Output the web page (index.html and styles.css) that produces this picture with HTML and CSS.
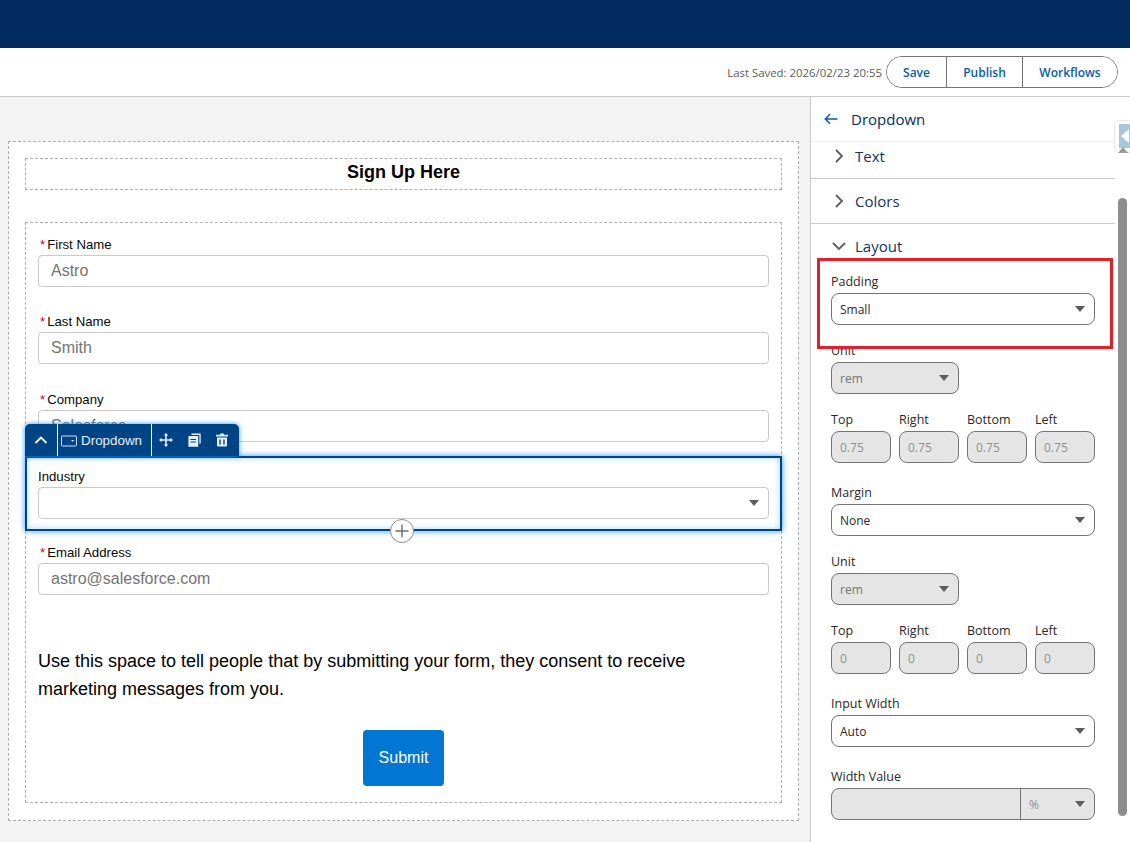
FILE: index.html
```html
<!DOCTYPE html>
<html lang="en">
<head>
    <meta charset="UTF-8">
    <meta name="viewport" content="width=device-width, initial-scale=1.0">
    <title>Form Builder</title>
    <link rel="stylesheet" href="styles.css">
</head>
<body>
    <div class="top-bar"></div>

    <div class="action-bar">
        <span class="last-saved">Last Saved: 2026/02/23 20:55</span>
        <div class="action-group">
            <button class="action-btn btn-save">Save</button>
            <button class="action-btn btn-publish">Publish</button>
            <button class="action-btn btn-workflows">Workflows</button>
        </div>
    </div>

    <div class="workspace">
        <div class="canvas">
            <div class="form-card">
                <div class="form-title">Sign Up Here</div>
                <div class="form-body">
                    <div class="field">
                        <label class="field-label"><span class="req">*</span>First Name</label>
                        <div class="field-input">Astro</div>
                    </div>
                    <div class="field">
                        <label class="field-label"><span class="req">*</span>Last Name</label>
                        <div class="field-input">Smith</div>
                    </div>
                    <div class="field">
                        <label class="field-label"><span class="req">*</span>Company</label>
                        <div class="field-input">Salesforce</div>
                    </div>
                    <div class="field field-selected">
                        <div class="block-toolbar">
                            <span class="tool tool-up">
                                <svg width="14" height="14" viewBox="0 0 14 14"><path d="M1.500 10 7 4.500 12.500 10" fill="none" stroke="#fff" stroke-width="1.800"/></svg>
                            </span>
                            <span class="tool tool-name">
                                <svg width="16" height="12" viewBox="0 0 16 12"><rect x="0.500" y="1" width="15" height="10" rx="1" fill="none" stroke="#cfe3f7" stroke-width="1"/><path d="M10 5h3.400l-1.700 1.800z" fill="#cfe3f7"/></svg>
                                Dropdown
                            </span>
                            <span class="tool tool-icon">
                                <svg width="14" height="14" viewBox="0 0 14 14"><path d="M7 0 9.300 2.600H7.800V6.200h3.600V4.700L14 7l-2.600 2.300V7.800H7.800v3.600h1.500L7 14l-2.300-2.600h1.500V7.800H2.600v1.500L0 7l2.600-2.300v1.500h3.600V2.600H4.700z" fill="#e6f0fa"/></svg>
                            </span>
                            <span class="tool tool-icon">
                                <svg width="13" height="14" viewBox="0 0 13 14"><path d="M3.500 0.500H12a.7.7 0 0 1 .7.7V10a.7.7 0 0 1-.7.7h-.6V2H3.500z" fill="#e6f0fa"/><path d="M1 3h8.600a.6.6 0 0 1 .6.6v9.600a.6.6 0 0 1-.6.6H1a.6.6 0 0 1-.6-.6V3.600A.6.6 0 0 1 1 3z" fill="#e6f0fa"/><path d="M2.400 6.500h5.600M2.400 9h5.600" stroke="#014486" stroke-width="1"/></svg>
                            </span>
                            <span class="tool tool-icon">
                                <svg width="12" height="14" viewBox="0 0 12 14"><path d="M4.200 0.500h3.600v1.300H12v1.600H0V1.800h4.200z" fill="#e6f0fa"/><path d="M1 4.600h10v8.200a.8.8 0 0 1-.8.8H1.800a.8.8 0 0 1-.8-.8z" fill="#e6f0fa"/><path d="M4 6.500v5M8 6.500v5" stroke="#014486" stroke-width="1.400"/></svg>
                            </span>
                        </div>
                        <label class="field-label">Industry</label>
                        <div class="field-input field-select"><span class="caret"></span></div>
                        <span class="add-block">
                            <svg width="14" height="14" viewBox="0 0 14 14"><path d="M7 0.500v13M0.500 7h13" stroke="#706e6b" stroke-width="1.400"/></svg>
                        </span>
                    </div>
                    <div class="field">
                        <label class="field-label"><span class="req">*</span>Email Address</label>
                        <div class="field-input">astro@salesforce.com</div>
                    </div>
                    <p class="consent">Use this space to tell people that by submitting your form, they consent to receive marketing messages from you.</p>
                    <div class="submit-row">
                        <button class="submit-btn">Submit</button>
                    </div>
                </div>
            </div>
        </div>

        <div class="panel">
            <div class="panel-header">
                <svg width="14" height="12" viewBox="0 0 14 12"><path d="M13.500 6H1.500M6 1.300 1.300 6 6 10.700" fill="none" stroke="#0b5cab" stroke-width="1.500"/></svg>
                <span>Dropdown</span>
            </div>

            <div class="section section-text">
                <svg class="chev" width="10" height="14" viewBox="0 0 10 14"><path d="M2 1 8 7 2 13" fill="none" stroke="#5c5c5c" stroke-width="1.800"/></svg>
                <span>Text</span>
            </div>
            <div class="section section-colors">
                <svg class="chev" width="10" height="14" viewBox="0 0 10 14"><path d="M2 1 8 7 2 13" fill="none" stroke="#5c5c5c" stroke-width="1.800"/></svg>
                <span>Colors</span>
            </div>
            <div class="section section-layout">
                <svg class="chev-down" width="14" height="10" viewBox="0 0 14 10"><path d="M1 2 7 8 13 2" fill="none" stroke="#5c5c5c" stroke-width="1.800"/></svg>
                <span>Layout</span>
            </div>

            <div class="panel-fields">
                <div class="prop prop-padding">
                    <div class="prop-label">Padding</div>
                    <div class="select">Small<span class="caret"></span></div>
                </div>
                <div class="prop prop-unit">
                    <div class="prop-label">Unit</div>
                    <div class="select select-half disabled">rem<span class="caret"></span></div>
                </div>
                <div class="sides">
                    <div class="side"><div class="prop-label">Top</div><div class="side-input">0.75</div></div>
                    <div class="side"><div class="prop-label">Right</div><div class="side-input">0.75</div></div>
                    <div class="side"><div class="prop-label">Bottom</div><div class="side-input">0.75</div></div>
                    <div class="side"><div class="prop-label">Left</div><div class="side-input">0.75</div></div>
                </div>
                <div class="prop prop-gap">
                    <div class="prop-label">Margin</div>
                    <div class="select">None<span class="caret"></span></div>
                </div>
                <div class="prop prop-unit-2">
                    <div class="prop-label">Unit</div>
                    <div class="select select-half disabled">rem<span class="caret"></span></div>
                </div>
                <div class="sides">
                    <div class="side"><div class="prop-label">Top</div><div class="side-input">0</div></div>
                    <div class="side"><div class="prop-label">Right</div><div class="side-input">0</div></div>
                    <div class="side"><div class="prop-label">Bottom</div><div class="side-input">0</div></div>
                    <div class="side"><div class="prop-label">Left</div><div class="side-input">0</div></div>
                </div>
                <div class="prop prop-gap">
                    <div class="prop-label">Input Width</div>
                    <div class="select">Auto<span class="caret"></span></div>
                </div>
                <div class="prop prop-gap">
                    <div class="prop-label">Width Value</div>
                    <div class="width-value">
                        <div class="width-input"></div>
                        <div class="width-unit">%<span class="caret"></span></div>
                    </div>
                </div>
            </div>

            <div class="highlight-box"></div>
            <div class="panel-scrollbar"></div>
            <div class="collapse-handle"><span class="collapse-tab"></span></div>
            <div class="scroll-arrow"></div>
        </div>
    </div>
</body>
</html>
```

FILE: styles.css
```css
* {
    box-sizing: border-box;
}
html, body {
    margin: 0;
    height: 100%;
    overflow: hidden;
}
body {
    font-family: 'Liberation Sans', Arial, sans-serif;
    background: #fff;
    color: #080707;
}
.top-bar {
    height: 48px;
    background: #032d60;
}
.action-bar {
    height: 49px;
    display: flex;
    align-items: center;
    justify-content: flex-end;
    padding: 0 12px 0 0;
    background: #fff;
    border-bottom: 1px solid #c9c9c9;
}
.last-saved {
    font-family: 'Open Sans', sans-serif;
    font-size: 11.400px;
    color: #5c5c5c;
    margin-right: 4px;
}
.action-group {
    display: flex;
    height: 32px;
    border: 1px solid #747474;
    border-radius: 16px;
    overflow: hidden;
}
.action-btn {
    font-family: 'Open Sans', sans-serif;
    font-size: 12px;
    font-weight: 600;
    color: #0b5cab;
    background: #fff;
    border: none;
    padding: 0;
    text-align: center;
}
.btn-save {
    width: 59px;
}
.btn-publish {
    width: 76px;
    border-left: 1px solid #747474;
}
.btn-workflows {
    width: 95px;
    border-left: 1px solid #747474;
}

.workspace {
    display: flex;
    height: 745px;
}
.canvas {
    width: 811px;
    background: #f3f3f3;
    padding: 44px 11px 0 8px;
    border-right: 1px solid #c9c9c9;
}

/* form on the canvas */
.form-card {
    height: 680px;
    background: #fff;
    border: 1px dashed #aeaeae;
    padding: 16px 16px;
}
.form-title {
    height: 32px;
    border: 1px dashed #aeaeae;
    text-align: center;
    font-size: 18px;
    font-weight: bold;
    line-height: 26px;
    color: #000;
}
.form-body {
    height: 581px;
    margin-top: 32px;
    border: 1px dashed #aeaeae;
    padding: 10px 12px 0;
    display: flex;
    flex-direction: column;
}
.field {
    height: 54px;
    margin-bottom: 23.400px;
    flex: none;
}
.field-label {
    display: block;
    height: 22px;
    font-size: 13.200px;
    line-height: 24px;
    color: #080707;
    padding-left: 2px;
}
.req {
    color: #ba0517;
    margin-right: 2px;
}
.field-input {
    height: 32px;
    border: 1px solid #c9c9c9;
    border-radius: 4px;
    padding: 0 12px;
    font-size: 16px;
    line-height: 30px;
    color: #747474;
    background: #fff;
}
.field-selected {
    position: relative;
    height: 75px;
    margin: -9.200px -13px 10px;
    padding: 7px 11px 0;
    border: 2px solid #014486;
    background: #fff;
    box-shadow: 0 0 6px #1b96ff, inset 0 0 6px #a9d4fb;
}
.field-selected .field-label {
    padding-left: 0;
}
.field-select {
    position: relative;
}
.block-toolbar {
    position: absolute;
    left: -2px;
    top: -34px;
    height: 32px;
    display: flex;
    align-items: center;
    padding-right: 3px;
    background: #014486;
    border-radius: 5px 5px 0 0;
    box-shadow: 0 0 5px #1b96ff;
    color: #e6f0fa;
    font-size: 13.400px;
}
.tool {
    display: flex;
    align-items: center;
    justify-content: center;
    height: 100%;
}
.tool-up {
    width: 33px;
    border-right: 1px solid #fff;
}
.tool-name {
    width: 94px;
    gap: 4px;
    padding: 2px 0 0 3px;
    justify-content: flex-start;
    border-right: 1px solid #fff;
}
.tool-icon {
    width: 28px;
}
.add-block {
    position: absolute;
    left: 363px;
    bottom: -14px;
    width: 24px;
    height: 24px;
    border: 1px solid #8e8e8e;
    border-radius: 50%;
    background: #fff;
    display: flex;
    align-items: center;
    justify-content: center;
}
.consent {
    margin: 28.600px 0 0;
    font-size: 18px;
    line-height: 28px;
    color: #000;
}
.submit-row {
    margin-top: 27px;
    text-align: center;
}
.submit-btn {
    width: 81px;
    height: 56px;
    background: #0176d3;
    color: #fff;
    border: none;
    border-radius: 4px;
    font-family: 'Liberation Sans', Arial, sans-serif;
    font-size: 16px;
}

/* property panel */
.panel {
    position: relative;
    flex: 1;
    font-family: 'Open Sans', sans-serif;
    background: #fff;
    overflow: hidden;
}
.panel-header {
    height: 45px;
    display: flex;
    align-items: center;
    gap: 13px;
    padding: 0 0 1px 13px;
    font-size: 15px;
    color: #032d60;
    border-bottom: 1px solid #f3f3f3;
}
.section {
    display: flex;
    align-items: center;
    width: 304px;
    font-size: 15px;
    color: #16325c;
}
.section .chev {
    margin: 0 11px 0 23px;
}
.section .chev-down {
    margin: 0 9px 0 21px;
}
.section-text {
    height: 37px;
    border-bottom: 1px solid #c9c9c9;
    padding-bottom: 9px;
}
.section-colors {
    height: 45px;
    border-bottom: 1px solid #c9c9c9;
}
.section-layout {
    height: 45px;
    padding-bottom: 2px;
}
.panel-fields {
    padding: 0 35px 0 20px;
}
.prop-label {
    height: 18px;
    font-size: 12.500px;
    line-height: 18px;
    color: #2b2826;
}
.prop {
    display: flex;
    flex-direction: column;
    gap: 2px;
}
.prop-padding {
    margin-top: 4px;
}
.prop-unit {
    margin-top: 17px;
}
.prop-unit-2 {
    margin-top: 17px;
}
.prop-gap {
    margin-top: 21px;
}
.select {
    position: relative;
    height: 32px;
    border: 1px solid #747474;
    border-radius: 8px;
    padding: 0 8px;
    font-size: 12px;
    line-height: 31px;
    color: #2b2826;
    background: #fff;
}
.select-half {
    width: 128px;
}
.disabled {
    background: #e5e5e5;
    color: #747474;
}
.caret {
    position: absolute;
    right: 9px;
    top: 12px;
    width: 0;
    height: 0;
    border-left: 5px solid transparent;
    border-right: 5px solid transparent;
    border-top: 6px solid #5c5c5c;
}
.sides {
    display: flex;
    gap: 8px;
    margin-top: 17px;
}
.side {
    width: 60px;
    display: flex;
    flex-direction: column;
    gap: 2px;
}
.side-input {
    height: 32px;
    border: 1px solid #747474;
    border-radius: 8px;
    background: #e5e5e5;
    color: #8e8e8e;
    font-size: 12px;
    line-height: 31px;
    padding: 0 8px;
}
.width-value {
    display: flex;
    height: 32px;
    border: 1px solid #747474;
    border-radius: 8px;
    background: #e5e5e5;
    font-size: 12px;
    color: #8e8e8e;
    line-height: 31px;
    overflow: hidden;
}
.width-input {
    width: 189px;
    border-right: 1px solid #747474;
}
.width-unit {
    position: relative;
    flex: 1;
    padding-left: 8px;
}
.highlight-box {
    position: absolute;
    left: 6px;
    top: 161px;
    width: 296px;
    height: 91px;
    border: 3px solid #e1202e;
    pointer-events: none;
}
.panel-scrollbar {
    position: absolute;
    left: 307px;
    top: 101px;
    width: 9px;
    height: 618px;
    background: #8d8d8d;
    border-radius: 5px;
}
.scroll-arrow {
    position: absolute;
    left: 307px;
    top: 50px;
    width: 0;
    height: 0;
    border-left: 5px solid transparent;
    border-right: 5px solid transparent;
    border-bottom: 6px solid #9a9a9a;
}
.collapse-handle {
    position: absolute;
    left: 303px;
    top: 23px;
    width: 16px;
    height: 33px;
    background: #fff;
    border: 1px solid #e8e8e8;
    border-right: none;
    border-radius: 5px 0 0 5px;
    padding: 3px 0 4px 4px;
}
/* light blue tab with the white arrow cut in */
.collapse-tab {
    position: relative;
    display: block;
    height: 100%;
    background: #a9c7dc;
}
.collapse-tab::after {
    content: "";
    position: absolute;
    left: 2px;
    top: 5px;
    width: 0;
    height: 0;
    border-top: 7px solid transparent;
    border-bottom: 7px solid transparent;
    border-right: 8px solid #fff;
}
```
